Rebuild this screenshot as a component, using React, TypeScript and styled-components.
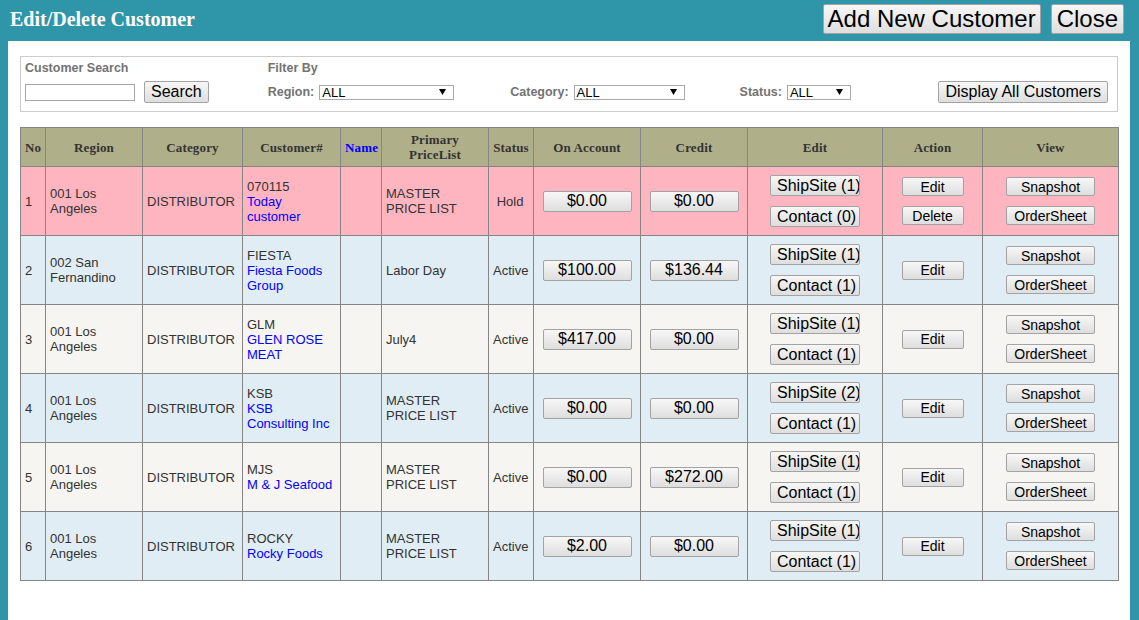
import styled, { createGlobalStyle } from "styled-components";

const GlobalStyle = createGlobalStyle`
  html, body {
    margin: 0;
    padding: 0;
    background: #2f95a9;
    font-family: "Liberation Sans", Arial, sans-serif;
  }
  #root {
    min-height: 100vh;
    display: flex;
    flex-direction: column;
  }
`;

const Page = styled.div`
  flex: 1;
  display: flex;
  flex-direction: column;
`;

const TopBar = styled.div`
  height: 38px;
  padding: 0 15px 3px 10px;
  display: flex;
  align-items: center;
  gap: 10px;
`;

const Title = styled.h1`
  margin: 0;
  flex: 1;
  font-family: "Liberation Serif", "Times New Roman", serif;
  font-size: 20px;
  font-weight: bold;
  color: #fff;
`;

const Panel = styled.div`
  flex: 1;
  background: #fff;
  margin: 0 9px 0 8px;
  padding: 15px 12px;
`;

const Btn = styled.button<{ $fs: number; $h: number; $w?: number; $px?: number }>`
  box-sizing: border-box;
  height: ${(p) => p.$h}px;
  width: ${(p) => (p.$w ? `${p.$w}px` : "auto")};
  padding: 0 ${(p) => p.$px ?? 6}px;
  margin: 0;
  font-family: "Liberation Sans", Arial, sans-serif;
  font-size: ${(p) => p.$fs}px;
  line-height: 1;
  color: #000;
  background: linear-gradient(#f7f7f7, #dedede);
  border: 1px solid #a3a3a3;
  border-radius: 2px;
  white-space: nowrap;
  overflow: hidden;
  text-align: center;
  cursor: pointer;
`;

const FilterBox = styled.div`
  border: 1px solid #cccccc;
  padding: 4px 9px 8px 4px;
  display: flex;
  align-items: flex-end;
`;

const Group = styled.div<{ $offset?: number }>`
  display: flex;
  flex-direction: column;
  gap: 5px;
  margin-left: ${(p) => p.$offset ?? 0}px;
`;

const Label = styled.span`
  font-size: 12.5px;
  line-height: 15px;
  font-weight: bold;
  color: #737373;
  white-space: nowrap;
`;

const ControlRow = styled.div<{ $gap?: number }>`
  display: flex;
  align-items: center;
  height: 22px;
  gap: ${(p) => p.$gap ?? 0}px;
`;

const TextInput = styled.input`
  box-sizing: border-box;
  width: 110px;
  height: 17px;
  border: 1px solid #a5a5a5;
  padding: 0 2px;
  margin: 0;
`;

const Field = styled.label<{ $offset?: number }>`
  display: flex;
  align-items: center;
  gap: 5px;
  margin-left: ${(p) => p.$offset ?? 0}px;
`;

const SelectBox = styled.div<{ $w: number }>`
  box-sizing: border-box;
  width: ${(p) => p.$w}px;
  height: 15px;
  border: 1px solid #a9a9a9;
  padding: 0 7px 0 2px;
  display: flex;
  align-items: center;
  justify-content: space-between;
  font-size: 13px;
  color: #000;
  background: #fff;
`;

const Spacer = styled.div`
  flex: 1;
`;

const Table = styled.table`
  width: 1098px;
  margin-top: 15px;
  border-collapse: collapse;
  table-layout: fixed;
  border: 1px solid #858585;
`;

const HeadCell = styled.th<{ $link?: boolean }>`
  height: 38px;
  padding: 0 4px;
  background: #afaf8a;
  border: 1px solid #858585;
  font-family: "Liberation Serif", "Times New Roman", serif;
  font-size: 13px;
  letter-spacing: 0.15px;
  line-height: 15px;
  font-weight: bold;
  color: ${(p) => (p.$link ? "#0000ff" : "#333")};
  text-align: center;
`;

const tones = {
  hold: "#ffb5c0",
  blue: "#e1edf4",
  plain: "#f6f5f1",
};

type Tone = keyof typeof tones;

const Row = styled.tr<{ $tone: Tone }>`
  background: ${(p) => tones[p.$tone]};
`;

const Cell = styled.td<{ $center?: boolean; $nowrap?: boolean }>`
  height: 68px;
  padding: 0 6px 0 4px;
  border: 1px solid #858585;
  font-size: 13px;
  line-height: 15px;
  color: #333;
  text-align: ${(p) => (p.$center ? "center" : "left")};
  white-space: ${(p) => (p.$nowrap ? "nowrap" : "normal")};
  vertical-align: middle;
`;

const ButtonCell = styled.td`
  height: 68px;
  padding: 0;
  border: 1px solid #858585;
  vertical-align: middle;
`;

const Stack = styled.div<{ $gap: number }>`
  display: flex;
  flex-direction: column;
  align-items: center;
  gap: ${(p) => p.$gap}px;
`;

const LinkText = styled.a`
  display: block;
  color: #0000ff;
  text-decoration: none;
`;

const Arrow = () => (
  <svg width="7" height="6" viewBox="0 0 7 6">
    <path d="M0 0 L7 0 L3.5 6 Z" fill="#000" />
  </svg>
);

type Customer = {
  no: number;
  region: string;
  category: string;
  code: string;
  name: string;
  priceList: string;
  status: string;
  account: string;
  credit: string;
  shipSites: number;
  contacts: number;
  canDelete?: boolean;
  tone: Tone;
};

const customers: Customer[] = [
  { no: 1, region: "001 Los Angeles", category: "DISTRIBUTOR", code: "070115", name: "Today customer", priceList: "MASTER PRICE LIST", status: "Hold", account: "$0.00", credit: "$0.00", shipSites: 1, contacts: 0, canDelete: true, tone: "hold" },
  { no: 2, region: "002 San Fernandino", category: "DISTRIBUTOR", code: "FIESTA", name: "Fiesta Foods Group", priceList: "Labor Day", status: "Active", account: "$100.00", credit: "$136.44", shipSites: 1, contacts: 1, tone: "blue" },
  { no: 3, region: "001 Los Angeles", category: "DISTRIBUTOR", code: "GLM", name: "GLEN ROSE MEAT", priceList: "July4", status: "Active", account: "$417.00", credit: "$0.00", shipSites: 1, contacts: 1, tone: "plain" },
  { no: 4, region: "001 Los Angeles", category: "DISTRIBUTOR", code: "KSB", name: "KSB Consulting Inc", priceList: "MASTER PRICE LIST", status: "Active", account: "$0.00", credit: "$0.00", shipSites: 2, contacts: 1, tone: "blue" },
  { no: 5, region: "001 Los Angeles", category: "DISTRIBUTOR", code: "MJS", name: "M & J Seafood", priceList: "MASTER PRICE LIST", status: "Active", account: "$0.00", credit: "$272.00", shipSites: 1, contacts: 1, tone: "plain" },
  { no: 6, region: "001 Los Angeles", category: "DISTRIBUTOR", code: "ROCKY", name: "Rocky Foods", priceList: "MASTER PRICE LIST", status: "Active", account: "$2.00", credit: "$0.00", shipSites: 1, contacts: 1, tone: "blue" },
];

const columns = [25, 97, 100, 98, 41, 107, 45, 107, 107, 135, 100, 136];

const App = () => {
  return (
    <Page>
      <GlobalStyle />
      <TopBar>
        <Title>Edit/Delete Customer</Title>
        <Btn $fs={24} $h={30} $px={4}>Add New Customer</Btn>
        <Btn $fs={24} $h={30} $px={5}>Close</Btn>
      </TopBar>
      <Panel>
        <FilterBox>
          <Group>
            <Label>Customer Search</Label>
            <ControlRow $gap={9}>
              <TextInput type="text" />
              <Btn $fs={16} $h={22}>Search</Btn>
            </ControlRow>
          </Group>
          <Group $offset={59}>
            <Label>Filter By</Label>
            <ControlRow>
              <Field>
                <Label>Region:</Label>
                <SelectBox $w={135}>ALL<Arrow /></SelectBox>
              </Field>
              <Field $offset={56}>
                <Label>Category:</Label>
                <SelectBox $w={111}>ALL<Arrow /></SelectBox>
              </Field>
              <Field $offset={55}>
                <Label>Status:</Label>
                <SelectBox $w={64}>ALL<Arrow /></SelectBox>
              </Field>
            </ControlRow>
          </Group>
          <Spacer />
          <Btn $fs={16} $h={22}>Display All Customers</Btn>
        </FilterBox>

        <Table>
          <colgroup>
            {columns.map((w, i) => (
              <col key={i} style={{ width: w }} />
            ))}
          </colgroup>
          <thead>
            <tr>
              <HeadCell>No</HeadCell>
              <HeadCell>Region</HeadCell>
              <HeadCell>Category</HeadCell>
              <HeadCell>Customer#</HeadCell>
              <HeadCell $link>Name</HeadCell>
              <HeadCell>Primary PriceList</HeadCell>
              <HeadCell>Status</HeadCell>
              <HeadCell>On Account</HeadCell>
              <HeadCell>Credit</HeadCell>
              <HeadCell>Edit</HeadCell>
              <HeadCell>Action</HeadCell>
              <HeadCell>View</HeadCell>
            </tr>
          </thead>
          <tbody>
            {customers.map((c) => (
              <Row key={c.no} $tone={c.tone}>
                <Cell>{c.no}</Cell>
                <Cell>{c.region}</Cell>
                <Cell $nowrap>{c.category}</Cell>
                <Cell>
                  {c.code}
                  <LinkText href="#">{c.name}</LinkText>
                </Cell>
                <Cell />
                <Cell>{c.priceList}</Cell>
                <Cell $center>{c.status}</Cell>
                <ButtonCell>
                  <Stack $gap={0}>
                    <Btn $fs={16} $h={21} $w={89}>{c.account}</Btn>
                  </Stack>
                </ButtonCell>
                <ButtonCell>
                  <Stack $gap={0}>
                    <Btn $fs={16} $h={21} $w={89}>{c.credit}</Btn>
                  </Stack>
                </ButtonCell>
                <ButtonCell>
                  <Stack $gap={10}>
                    <Btn $fs={16} $h={21} $w={90}>ShipSite ({c.shipSites})</Btn>
                    <Btn $fs={16} $h={21} $w={90}>Contact ({c.contacts})</Btn>
                  </Stack>
                </ButtonCell>
                <ButtonCell>
                  <Stack $gap={10}>
                    <Btn $fs={14} $h={19} $w={62}>Edit</Btn>
                    {c.canDelete && <Btn $fs={14} $h={19} $w={62}>Delete</Btn>}
                  </Stack>
                </ButtonCell>
                <ButtonCell>
                  <Stack $gap={10}>
                    <Btn $fs={14} $h={19} $w={89}>Snapshot</Btn>
                    <Btn $fs={14} $h={19} $w={89}>OrderSheet</Btn>
                  </Stack>
                </ButtonCell>
              </Row>
            ))}
          </tbody>
        </Table>
      </Panel>
    </Page>
  );
};

export default App;
